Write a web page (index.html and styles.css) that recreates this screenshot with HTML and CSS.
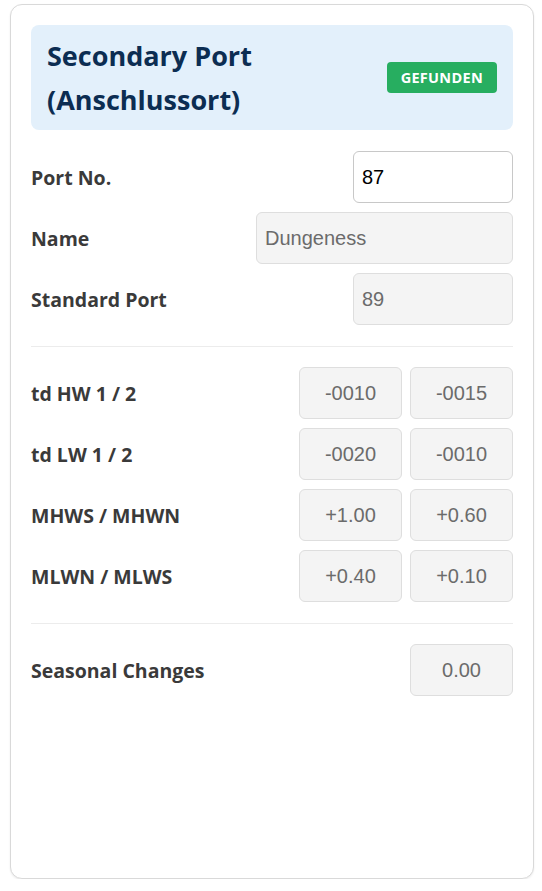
FILE: index.html
```html
<!DOCTYPE html>
<html lang="de">

<head>
    <meta charset="UTF-8">
    <meta name="viewport" content="width=device-width, initial-scale=1.0">
    <title>Secondary Port</title>
    <link rel="stylesheet" href="styles.css">
</head>

<body>
    <div class="card">
        <div class="card-header">
            <h2>Secondary Port<br>(Anschlussort)</h2>
            <span class="badge">GEFUNDEN</span>
        </div>

        <div class="row">
            <label for="portNo">Port No.</label>
            <input type="text" id="portNo" class="field w-160" value="87">
        </div>
        <div class="row">
            <label>Name</label>
            <input type="text" class="field w-256 readonly" value="Dungeness" readonly>
        </div>
        <div class="row">
            <label>Standard Port</label>
            <input type="text" class="field w-160 readonly" value="89" readonly>
        </div>

        <hr class="divider">

        <div class="row">
            <label>td HW 1 / 2</label>
            <div class="pair">
                <input type="text" class="field small readonly" value="-0010" readonly>
                <input type="text" class="field small readonly" value="-0015" readonly>
            </div>
        </div>
        <div class="row">
            <label>td LW 1 / 2</label>
            <div class="pair">
                <input type="text" class="field small readonly" value="-0020" readonly>
                <input type="text" class="field small readonly" value="-0010" readonly>
            </div>
        </div>
        <div class="row">
            <label>MHWS / MHWN</label>
            <div class="pair">
                <input type="text" class="field small readonly" value="+1.00" readonly>
                <input type="text" class="field small readonly" value="+0.60" readonly>
            </div>
        </div>
        <div class="row">
            <label>MLWN / MLWS</label>
            <div class="pair">
                <input type="text" class="field small readonly" value="+0.40" readonly>
                <input type="text" class="field small readonly" value="+0.10" readonly>
            </div>
        </div>

        <hr class="divider">

        <div class="row">
            <label>Seasonal Changes</label>
            <input type="text" class="field small readonly" value="0.00" readonly>
        </div>
    </div>
</body>

</html>
```

FILE: styles.css
```css
body {
    font-family: "Open Sans", "Noto Sans", sans-serif;
    background-color: #ffffff;
    margin: 0;
    padding: 4px 8px 0 10px;
}

.card {
    box-sizing: border-box;
    width: 524px;
    height: 875px;
    padding: 20px;
    background: white;
    border: 1px solid #d9d9d9;
    border-radius: 12px;
    box-shadow: 0 1px 2px rgba(0, 0, 0, 0.08);
}

.card-header {
    display: flex;
    justify-content: space-between;
    align-items: center;
    height: 105px;
    box-sizing: border-box;
    padding: 0 16px;
    margin-bottom: 21px;
    background-color: #e3f0fb;
    border-radius: 8px;
}

.card-header h2 {
    margin: 0;
    font-size: 27px;
    line-height: 44px;
    font-weight: 700;
    color: #0c2d52;
}

.badge {
    padding: 6px 14px;
    background-color: #27ae60;
    color: white;
    font-size: 14.5px;
    font-weight: 700;
    line-height: 19px;
    letter-spacing: 0.3px;
    border-radius: 4px;
}

.row {
    display: flex;
    justify-content: space-between;
    align-items: center;
    margin-bottom: 9px;
}

.row label {
    font-size: 19.5px;
    font-weight: 700;
    color: #3a3a3a;
}

.pair {
    display: flex;
    gap: 8px;
}

.field {
    box-sizing: border-box;
    height: 52px;
    padding: 0 8px;
    font-family: "Liberation Sans", Arial, sans-serif;
    font-size: 20px;
    color: #000;
    background: white;
    border: 1px solid #c8c8c8;
    border-radius: 6px;
    outline: none;
}

.field.readonly {
    color: #6b6b6b;
    background-color: #f4f4f4;
    border-color: #dedede;
}

.w-160 {
    width: 160px;
}

.w-256 {
    width: 257px;
}

.small {
    width: 103px;
    text-align: center;
}

.divider {
    border: none;
    border-top: 1px solid #ececec;
    margin: 21px 0 20px;
}
```
